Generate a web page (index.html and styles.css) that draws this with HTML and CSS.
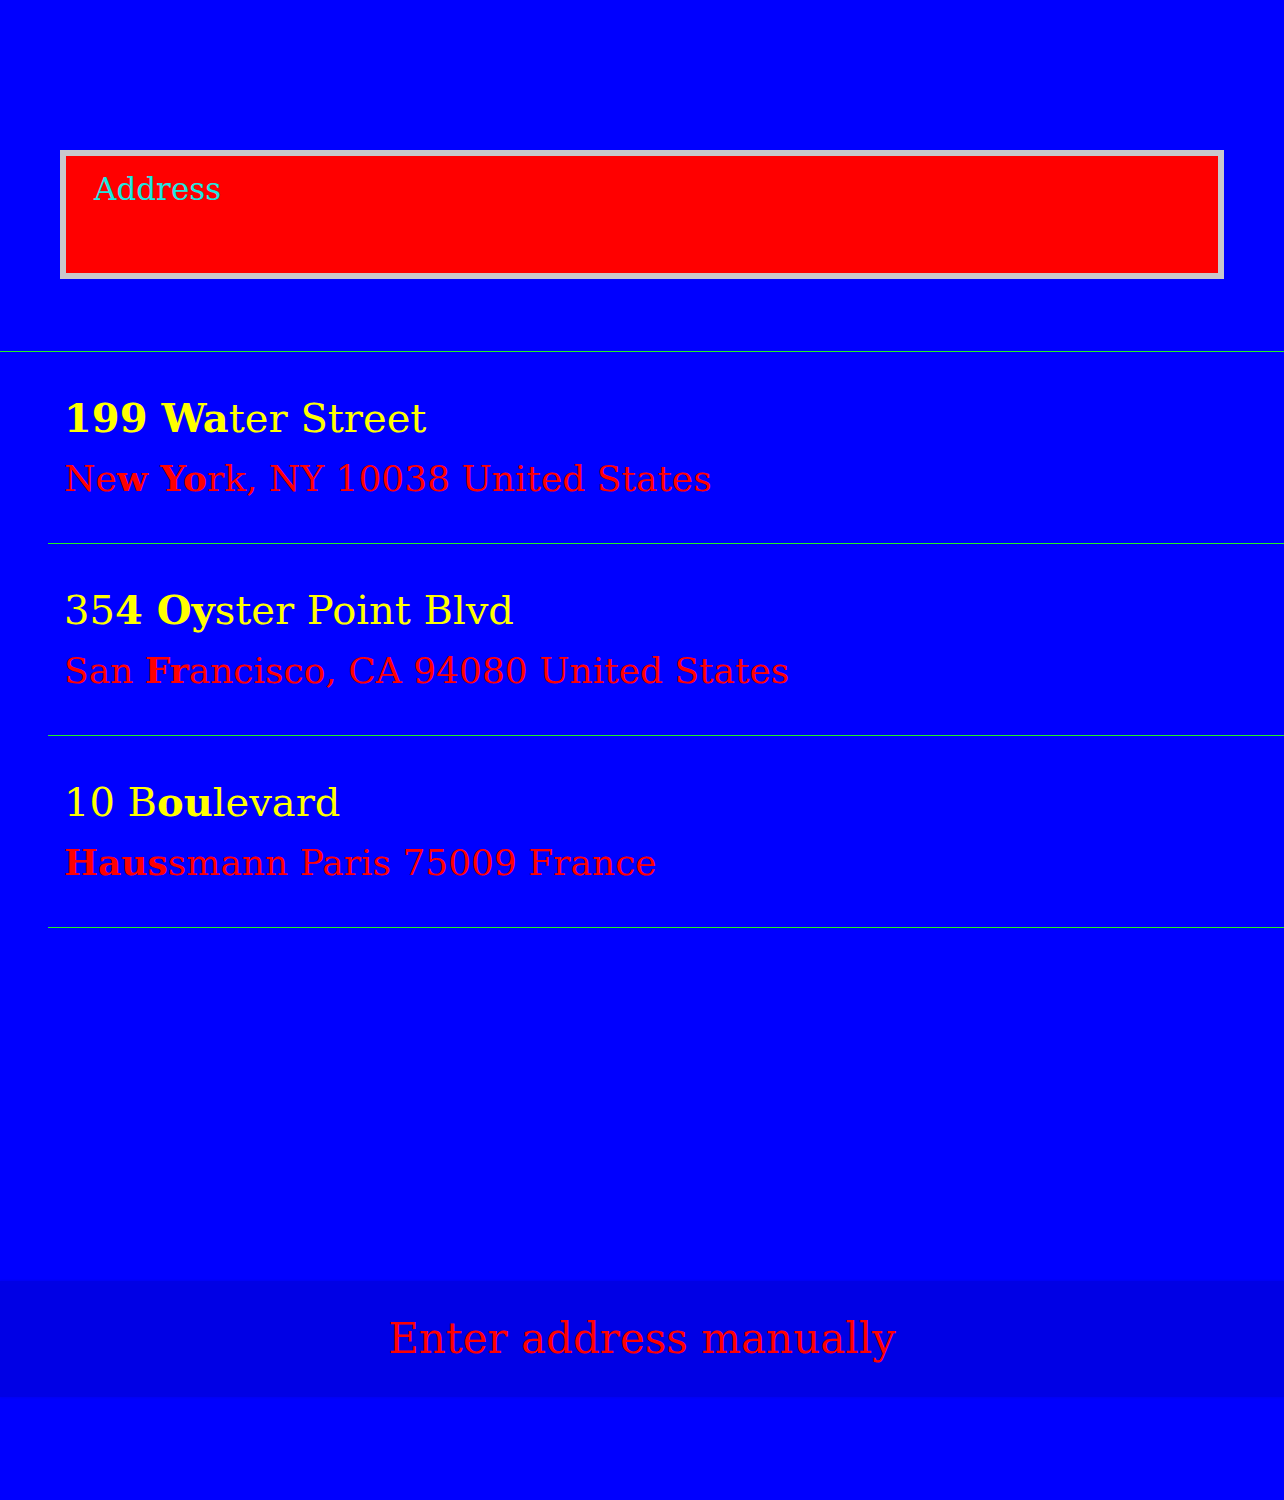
FILE: index.html
```html
<!DOCTYPE html>
<html lang="en">
<head>
<meta charset="utf-8">
<title>Address search</title>
<link rel="stylesheet" href="styles.css">
</head>
<body>
<main class="page">
  <div class="search">
    <div class="field"><span class="placeholder">Address</span></div>
  </div>
  <ul class="results">
    <li class="result">
      <div class="line1"><b>199 Wa</b>ter Street</div>
      <div class="line2">Ne<b>w Yo</b>rk, NY 10038 United States</div>
    </li>
    <li class="result">
      <div class="line1">35<b>4 Oy</b>ster Point Blvd</div>
      <div class="line2">San <b>Fr</b>ancisco, CA 94080 United States</div>
    </li>
    <li class="result">
      <div class="line1">10 B<b>ou</b>levard</div>
      <div class="line2"><b>Haus</b>smann Paris 75009 France</div>
    </li>
  </ul>
  <div class="footer">
    <button class="manual" type="button">Enter address manually</button>
  </div>
</main>
</body>
</html>
```
FILE: styles.css
```css
html, body {
  margin: 0;
  padding: 0;
  background: #0000ff;
}
body {
  font-family: "DejaVu Serif", "Liberation Serif", serif;
}
.page {
  min-height: 100vh;
  display: flex;
  flex-direction: column;
}
.search {
  padding: 150px 60px 0;
}
.field {
  background: #ff0000;
  border: 6px solid #c8c8cc;
  padding: 18px 28px 0;
  box-sizing: content-box;
  height: 99px;
}
.placeholder {
  display: block;
  color: #1ee6e0;
  font-size: 31px;
  line-height: 30px;
}
.results {
  list-style: none;
  margin: 72px 0 0;
  padding: 0;
  border-top: 1px solid #22f022;
}
.result {
  margin-left: 48px;
  padding: 0 0 0 16px;
  height: 191px;
  border-bottom: 1px solid #22f022;
  display: flex;
  flex-direction: column;
}
.line1 {
  color: #ffff00;
  font-size: 40px;
  line-height: 40px;
  margin-top: 46px;
}
.line2 {
  color: #ff0000;
  font-size: 36px;
  line-height: 40px;
  margin-top: 20px;
}
.line1 b, .line2 b {
  font-weight: 700;
}
.footer {
  margin-top: auto;
  margin-bottom: 103px;
}
.manual {
  display: block;
  width: 100%;
  height: 116px;
  border: 0;
  margin: 0;
  padding: 0;
  background: #0000e5;
  box-shadow: 0 -1px 2px rgba(0,0,0,0.05), 0 1px 2px rgba(0,0,0,0.05);
  color: #ff0000;
  font-family: "DejaVu Serif", "Liberation Serif", serif;
  font-size: 42px;
  line-height: 40px;
  cursor: pointer;
}
```
